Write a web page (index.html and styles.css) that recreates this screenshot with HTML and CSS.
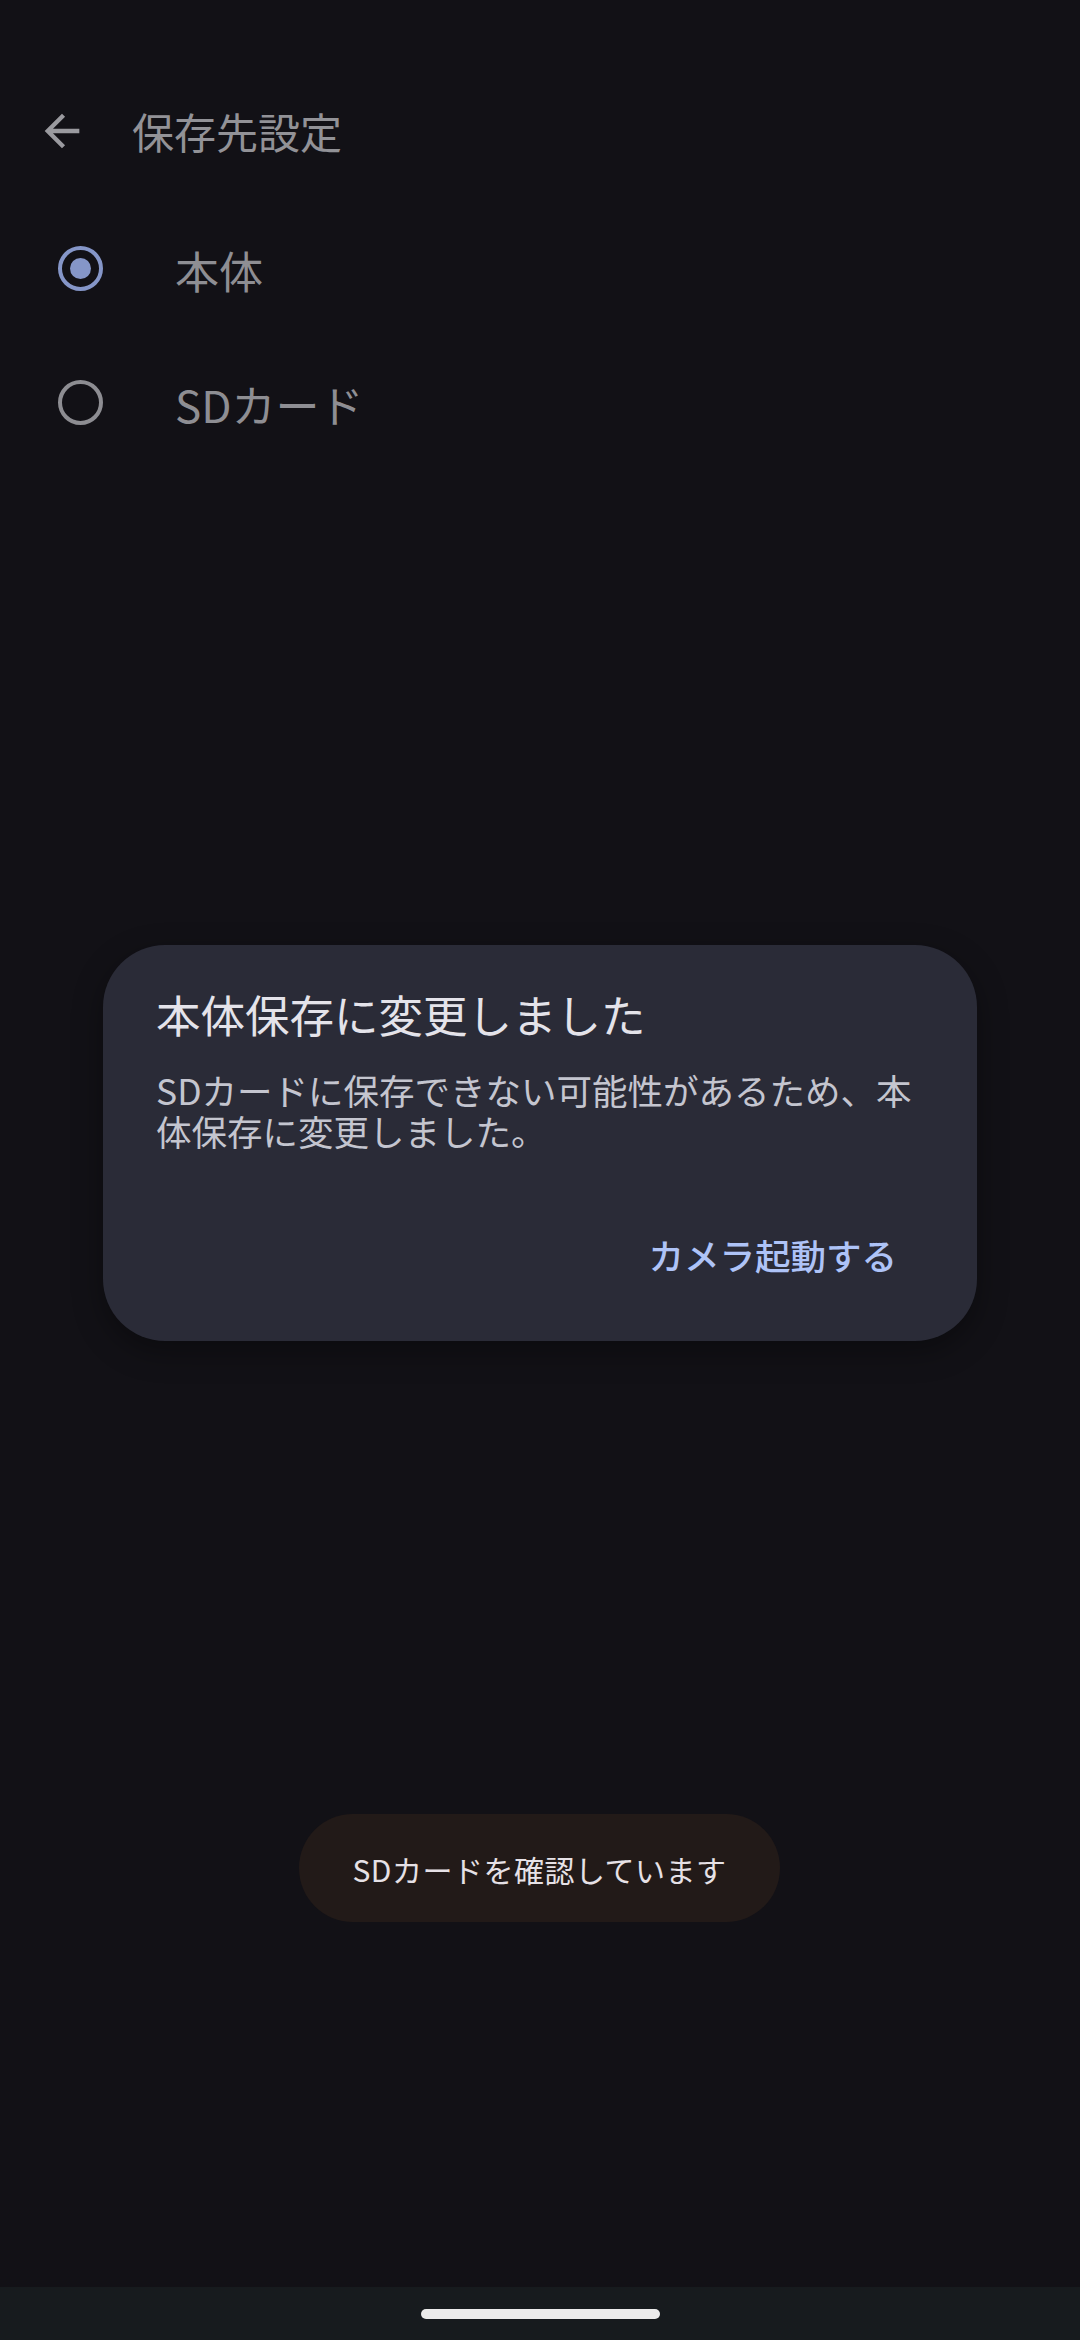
FILE: index.html
```html
<!DOCTYPE html>
<html lang="ja">
<head>
<meta charset="utf-8">
<title>保存先設定</title>
<link rel="stylesheet" href="styles.css">
</head>
<body>
<div class="screen">
  <main class="main">
    <header class="appbar">
      <svg class="back" viewBox="0 0 24 24" aria-hidden="true"><path d="M20 11H7.83l5.59-5.59L12 4l-8 8 8 8 1.41-1.41L7.83 13H20v-2z"/></svg>
      <h1 class="title">保存先設定</h1>
    </header>
    <ul class="options">
      <li class="option">
        <span class="radio checked"><span class="dot"></span></span>
        <span class="label">本体</span>
      </li>
      <li class="option">
        <span class="radio"></span>
        <span class="label">SDカード</span>
      </li>
    </ul>
  </main>
  <nav class="navbar"><span class="handle"></span></nav>

  <div class="dialog">
    <h2 class="dialog-title">本体保存に変更しました</h2>
    <p class="dialog-body">SDカードに保存できない可能性があるため、本体保存に変更しました。</p>
    <div class="dialog-actions">
      <button class="text-button">カメラ起動する</button>
    </div>
  </div>

  <div class="toast">SDカードを確認しています</div>
</div>
</body>
</html>
```

FILE: styles.css
```css
* { box-sizing: border-box; }
html, body {
  margin: 0;
  padding: 0;
  background: #121116;
}
body {
  font-family: "Noto Sans CJK JP", "Noto Sans", sans-serif;
}
.screen {
  position: relative;
  width: 1080px;
  height: 2340px;
  display: flex;
  flex-direction: column;
  background: #121116;
  overflow: hidden;
}
.main {
  flex: 1;
}
.appbar {
  margin-top: 68px;
  height: 126px;
  display: flex;
  align-items: center;
  padding-left: 36px;
  gap: 44px;
}
.back {
  width: 52px;
  height: 52px;
  fill: #9a9a9f;
}
.title {
  margin: 0;
  font-size: 42px;
  font-weight: 400;
  line-height: 56px;
  color: #929297;
}
.options {
  list-style: none;
  margin: 0;
  padding: 7px 0 0 0;
}
.option {
  height: 134px;
  display: flex;
  align-items: center;
  padding-left: 58px;
  gap: 72px;
}
.radio {
  width: 45px;
  height: 45px;
  border-radius: 50%;
  border: 4px solid #8d8d92;
  display: flex;
  align-items: center;
  justify-content: center;
  flex-shrink: 0;
}
.radio.checked {
  border-color: #8596c8;
}
.dot {
  width: 21px;
  height: 21px;
  border-radius: 50%;
  background: #8596c8;
}
.label {
  font-size: 44px;
  line-height: 56px;
  color: #8e8e93;
  padding-top: 4px;
}
.navbar {
  height: 53px;
  background: #171b1e;
  display: flex;
  align-items: center;
  justify-content: center;
}
.handle {
  width: 239px;
  height: 10px;
  border-radius: 5px;
  background: #ebebeb;
}
.dialog {
  position: absolute;
  left: 103px;
  top: 945px;
  width: 874px;
  height: 396px;
  border-radius: 62px;
  background: #2a2b37;
  padding: 41px 58px 0 53px;
  box-shadow: 0 10px 30px rgba(0,0,0,0.35);
  display: flex;
  flex-direction: column;
}
.dialog-title {
  margin: 0;
  font-size: 44.5px;
  font-weight: 400;
  line-height: 56px;
  color: #e4e3ea;
}
.dialog-body {
  margin: 27px 0 0 0;
  font-size: 35.5px;
  line-height: 41px;
  color: #c4c5cf;
}
.dialog-actions {
  display: flex;
  justify-content: flex-end;
  margin-top: 82px;
  padding-right: 22px;
}
.text-button {
  border: 0;
  background: none;
  padding: 0;
  font-family: inherit;
  font-size: 35.5px;
  font-weight: 500;
  line-height: 43px;
  color: #aec3f7;
}
.toast {
  position: absolute;
  left: 299px;
  top: 1814px;
  width: 481px;
  height: 108px;
  border-radius: 54px;
  background: #221a18;
  display: flex;
  align-items: center;
  justify-content: center;
  font-size: 30px;
  letter-spacing: 0.5px;
  color: #e6e1e6;
  padding-top: 2px;
}
```
